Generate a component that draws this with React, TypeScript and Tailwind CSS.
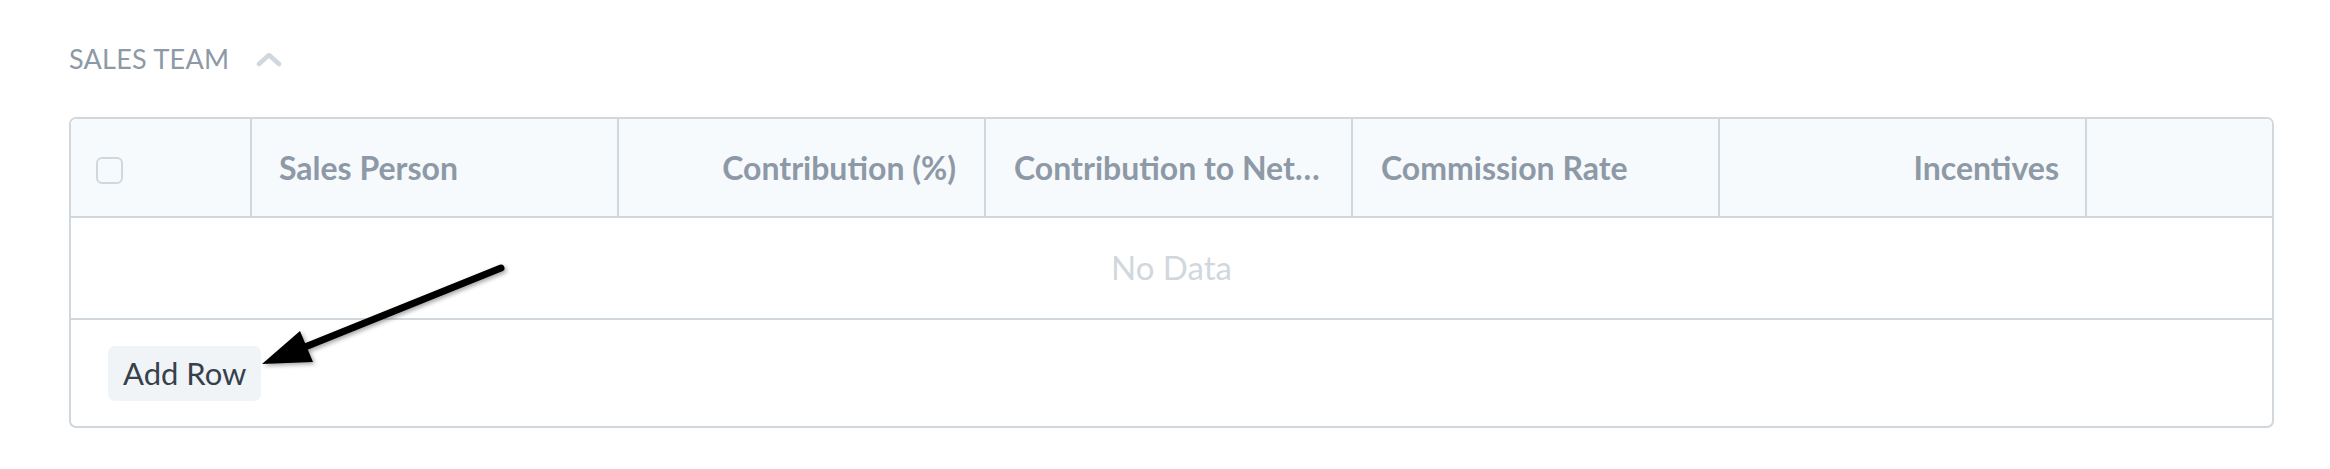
export default function App() {
  const font = { fontFamily: "Lato, 'Noto Sans', sans-serif" };
  return (
    <div className="min-h-screen bg-white relative" style={font}>
      <div className="pl-[69px] pr-[56px] pt-[37px]">
        {/* Section head */}
        <div className="h-[42px] flex items-center gap-[27px] mb-[38px]">
          <span className="text-[27px] tracking-[0.01em] text-[#8d99a6] leading-none">SALES TEAM</span>
          <svg width="26" height="16" viewBox="0 0 26 16" className="mt-[2px]">
            <polyline points="3,13 13,4 23,13" fill="none" stroke="#d1d8dd" strokeWidth="4.5" strokeLinecap="round" strokeLinejoin="round" />
          </svg>
        </div>

        {/* Grid */}
        <div className="border-2 border-[#d1d8dd] rounded-[7px] overflow-hidden">
          <div className="grid grid-cols-[181px_367px_367px_367px_367px_367px_1fr] h-[99px] bg-[#f7fafc] border-b-2 border-[#d1d8dd] text-[32px] font-bold text-[#8d99a6]">
            <div className="border-r-2 border-[#d1d8dd] flex items-center pl-[25px] pt-[6px]">
              <div className="w-[27px] h-[27px] rounded-[6px] border-2 border-[#d1d8dd] bg-[#f7fafc]" />
            </div>
            <div className="border-r-2 border-[#d1d8dd] flex items-center px-[27px]">
              <span className="truncate">Sales Person</span>
            </div>
            <div className="border-r-2 border-[#d1d8dd] flex items-center justify-end px-[28px]">
              <span className="truncate">Contribution (%)</span>
            </div>
            <div className="border-r-2 border-[#d1d8dd] flex items-center px-[28px] min-w-0">
              <span className="truncate">Contribution to Net Total</span>
            </div>
            <div className="border-r-2 border-[#d1d8dd] flex items-center px-[28px]">
              <span className="truncate">Commission Rate</span>
            </div>
            <div className="border-r-2 border-[#d1d8dd] flex items-center justify-end px-[26px]">
              <span className="truncate">Incentives</span>
            </div>
            <div />
          </div>

          <div className="h-[102px] border-b-2 border-[#d1d8dd] flex items-center justify-center text-[33px] text-[#d1d8dd]">
            No Data
          </div>

          <div className="h-[106px] flex items-center pl-[37px]">
            <button className="h-[55px] px-[15px] rounded-[7px] bg-[#f0f4f7] text-[31px] text-[#36414c] leading-none">
              Add Row
            </button>
          </div>
        </div>
      </div>

      {/* Annotation arrow */}
      <svg className="absolute left-0 top-0 pointer-events-none" width="2330" height="469">
        <defs>
          <filter id="sh" x="-20%" y="-20%" width="140%" height="140%">
            <feDropShadow dx="2" dy="2" stdDeviation="2" floodColor="#000" floodOpacity="0.35" />
          </filter>
        </defs>
        <g filter="url(#sh)">
          <line x1="501" y1="268" x2="300" y2="349" stroke="#000" strokeWidth="7" strokeLinecap="round" />
          <polygon points="262,364 300,331 313,362" fill="#000" />
        </g>
      </svg>
    </div>
  );
}
